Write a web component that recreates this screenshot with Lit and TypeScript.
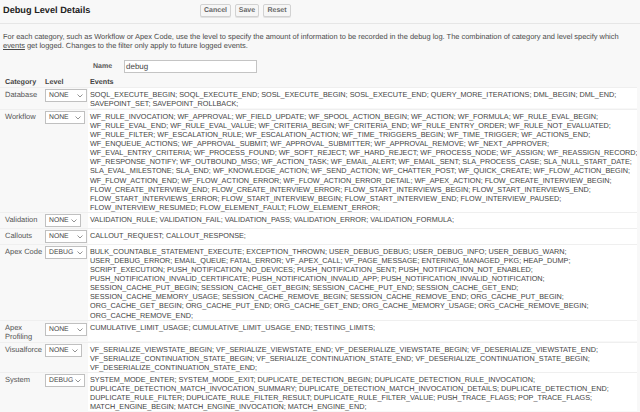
import { LitElement, html, css } from "lit";
import { customElement } from "lit/decorators.js";

interface Row { cat: string[]; level: string; w: number; h: number; mt: number; st: number; lines: string[]; }

const rows: Row[] = [
  { cat: ["Database"], level: "NONE", w: 42, h: 20, mt: 2, st: 1, lines: [
    "SOQL_EXECUTE_BEGIN; SOQL_EXECUTE_END; SOSL_EXECUTE_BEGIN; SOSL_EXECUTE_END; QUERY_MORE_ITERATIONS; DML_BEGIN; DML_END;",
    "SAVEPOINT_SET; SAVEPOINT_ROLLBACK;" ] },
  { cat: ["Workflow"], level: "NONE", w: 40, h: 102, mt: 2, st: 1, lines: [
    "WF_RULE_INVOCATION; WF_APPROVAL; WF_FIELD_UPDATE; WF_SPOOL_ACTION_BEGIN; WF_ACTION; WF_FORMULA; WF_RULE_EVAL_BEGIN;",
    "WF_RULE_EVAL_END; WF_RULE_EVAL_VALUE; WF_CRITERIA_BEGIN; WF_CRITERIA_END; WF_RULE_ENTRY_ORDER; WF_RULE_NOT_EVALUATED;",
    "WF_RULE_FILTER; WF_ESCALATION_RULE; WF_ESCALATION_ACTION; WF_TIME_TRIGGERS_BEGIN; WF_TIME_TRIGGER; WF_ACTIONS_END;",
    "WF_ENQUEUE_ACTIONS; WF_APPROVAL_SUBMIT; WF_APPROVAL_SUBMITTER; WF_APPROVAL_REMOVE; WF_NEXT_APPROVER;",
    "WF_EVAL_ENTRY_CRITERIA; WF_PROCESS_FOUND; WF_SOFT_REJECT; WF_HARD_REJECT; WF_PROCESS_NODE; WF_ASSIGN; WF_REASSIGN_RECORD;",
    "WF_RESPONSE_NOTIFY; WF_OUTBOUND_MSG; WF_ACTION_TASK; WF_EMAIL_ALERT; WF_EMAIL_SENT; SLA_PROCESS_CASE; SLA_NULL_START_DATE;",
    "SLA_EVAL_MILESTONE; SLA_END; WF_KNOWLEDGE_ACTION; WF_SEND_ACTION; WF_CHATTER_POST; WF_QUICK_CREATE; WF_FLOW_ACTION_BEGIN;",
    "WF_FLOW_ACTION_END; WF_FLOW_ACTION_ERROR; WF_FLOW_ACTION_ERROR_DETAIL; WF_APEX_ACTION; FLOW_CREATE_INTERVIEW_BEGIN;",
    "FLOW_CREATE_INTERVIEW_END; FLOW_CREATE_INTERVIEW_ERROR; FLOW_START_INTERVIEWS_BEGIN; FLOW_START_INTERVIEWS_END;",
    "FLOW_START_INTERVIEWS_ERROR; FLOW_START_INTERVIEW_BEGIN; FLOW_START_INTERVIEW_END; FLOW_INTERVIEW_PAUSED;",
    "FLOW_INTERVIEW_RESUMED; FLOW_ELEMENT_FAULT; FLOW_ELEMENT_ERROR;" ] },
  { cat: ["Validation"], level: "NONE", w: 36, h: 15, mt: 1, st: 1, lines: [
    "VALIDATION_RULE; VALIDATION_FAIL; VALIDATION_PASS; VALIDATION_ERROR; VALIDATION_FORMULA;" ] },
  { cat: ["Callouts"], level: "NONE", w: 42, h: 15, mt: 1, st: 1, lines: [
    "CALLOUT_REQUEST; CALLOUT_RESPONSE;" ] },
  { cat: ["Apex Code"], level: "DEBUG", w: 42, h: 75, mt: 1, st: 1, lines: [
    "BULK_COUNTABLE_STATEMENT_EXECUTE; EXCEPTION_THROWN; USER_DEBUG_DEBUG; USER_DEBUG_INFO; USER_DEBUG_WARN;",
    "USER_DEBUG_ERROR; EMAIL_QUEUE; FATAL_ERROR; VF_APEX_CALL; VF_PAGE_MESSAGE; ENTERING_MANAGED_PKG; HEAP_DUMP;",
    "SCRIPT_EXECUTION; PUSH_NOTIFICATION_NO_DEVICES; PUSH_NOTIFICATION_SENT; PUSH_NOTIFICATION_NOT_ENABLED;",
    "PUSH_NOTIFICATION_INVALID_CERTIFICATE; PUSH_NOTIFICATION_INVALID_APP; PUSH_NOTIFICATION_INVALID_NOTIFICATION;",
    "SESSION_CACHE_PUT_BEGIN; SESSION_CACHE_GET_BEGIN; SESSION_CACHE_PUT_END; SESSION_CACHE_GET_END;",
    "SESSION_CACHE_MEMORY_USAGE; SESSION_CACHE_REMOVE_BEGIN; SESSION_CACHE_REMOVE_END; ORG_CACHE_PUT_BEGIN;",
    "ORG_CACHE_GET_BEGIN; ORG_CACHE_PUT_END; ORG_CACHE_GET_END; ORG_CACHE_MEMORY_USAGE; ORG_CACHE_REMOVE_BEGIN;",
    "ORG_CACHE_REMOVE_END;" ] },
  { cat: ["Apex", "Profiling"], level: "NONE", w: 42, h: 20, mt: 1, st: 2, lines: [
    "CUMULATIVE_LIMIT_USAGE; CUMULATIVE_LIMIT_USAGE_END; TESTING_LIMITS;" ] },
  { cat: ["Visualforce"], level: "NONE", w: 37, h: 29, mt: 2, st: 1, lines: [
    "VF_SERIALIZE_VIEWSTATE_BEGIN; VF_SERIALIZE_VIEWSTATE_END; VF_DESERIALIZE_VIEWSTATE_BEGIN; VF_DESERIALIZE_VIEWSTATE_END;",
    "VF_SERIALIZE_CONTINUATION_STATE_BEGIN; VF_SERIALIZE_CONTINUATION_STATE_END; VF_DESERIALIZE_CONTINUATION_STATE_BEGIN;",
    "VF_DESERIALIZE_CONTINUATION_STATE_END;" ] },
  { cat: ["System"], level: "DEBUG", w: 40, h: 38, mt: 1, st: 1, lines: [
    "SYSTEM_MODE_ENTER; SYSTEM_MODE_EXIT; DUPLICATE_DETECTION_BEGIN; DUPLICATE_DETECTION_RULE_INVOCATION;",
    "DUPLICATE_DETECTION_MATCH_INVOCATION_SUMMARY; DUPLICATE_DETECTION_MATCH_INVOCATION_DETAILS; DUPLICATE_DETECTION_END;",
    "DUPLICATE_RULE_FILTER; DUPLICATE_RULE_FILTER_RESULT; DUPLICATE_RULE_FILTER_VALUE; PUSH_TRACE_FLAGS; POP_TRACE_FLAGS;",
    "MATCH_ENGINE_BEGIN; MATCH_ENGINE_INVOCATION; MATCH_ENGINE_END;" ] },
];

@customElement("app-root")
export class AppRoot extends LitElement {
  static styles = css`
    :host { display: block; width: 640px; height: 412px; overflow: hidden; background: #f8f8f8;
      font-family: "Liberation Sans", Arial, sans-serif; font-size: 7.5px; color: #444; text-rendering: geometricPrecision; }
    .head { display: flex; align-items: center; height: 24px; border-bottom: 1px solid #e6e6e6; padding-left: 3px; padding-bottom: 3px; box-sizing: border-box; }
    .title { font-weight: bold; font-size: 9.2px; color: #222; width: 197px; flex: none; }
    .btn { display: flex; align-items: center; justify-content: center; height: 11px; margin-right: 4px; border: 1px solid #d2d2d2; border-radius: 2px;
      background: #f6f6f6; box-shadow: 0 1px 0 #e2e2e2; font-weight: bold; font-size: 7px; color: #666; box-sizing: content-box; }
    .intro { padding: 8px 0 0 3px; line-height: 9.3px; color: #4a4a4a; height: 20px; white-space: nowrap; font-size: 7.44px; }
    .name { display: flex; align-items: center; margin-top: 8px; height: 13px; }
    .name b { margin-left: 93px; width: 31px; flex: none; color: #555; font-size: 7px; }
    .input { width: 130px; height: 11px; line-height: 11px; border: 1px solid #c4c4c4; background: #fff; font-size: 8px; color: #444; padding-left: 1px; }
    .cols { display: grid; grid-template-columns: 40px 45px 1fr; font-weight: bold; margin-top: 5px; padding-left: 5px; height: 8px; line-height: 8px; font-size: 7.2px; color: #444; }
    .row { display: flex; margin-right: 3px; box-shadow: 0 -1px 0 #efefef; }
    .cat { width: 40px; padding: 1.5px 0 0 5px; line-height: 9.2px; color: #555; flex: none; white-space: nowrap; box-sizing: border-box; }
    .lvl { width: 48px; flex: none; padding-left: 5px; box-sizing: border-box; }
    .sel { display: flex; align-items: center; justify-content: space-between; height: 11px; border: 1px solid #c0c0c0; background: #fff;
      padding: 0 3px 0 3px; font-size: 6.8px; color: #444; box-sizing: content-box; }
    .sel svg { flex: none; }
    .ev { flex: 1; background: #fff; white-space: nowrap; padding: 1.5px 0 0 2px; line-height: 9.15px; font-size: 7.28px; color: #444; overflow: hidden; min-width: 0; }
  `;

  render() {
    return html`
      <div class="head">
        <div class="title">Debug Level Details</div>
        <div class="btn" style="width:29px">Cancel</div><div class="btn" style="width:22px">Save</div><div class="btn" style="width:26px">Reset</div>
      </div>
      <div class="intro">
        For each category, such as Workflow or Apex Code, use the level to specify the amount of information to be recorded in the debug log. The combination of category and level specify which<br>
        <u>events</u> get logged. Changes to the filter only apply to future logged events.
      </div>
      <div class="name"><b>Name</b><div class="input">debug</div></div>
      <div class="cols"><span>Category</span><span>Level</span><span>Events</span></div>
      ${rows.map(r => html`
        <div class="row" style="height:${r.h}px;margin-top:${r.mt}px">
          <div class="cat">${r.cat.map((c, i) => html`${i ? html`<br>` : ""}${c}`)}</div>
          <div class="lvl" style="padding-top:${r.st}px"><div class="sel" style="width:${r.w - 8}px"><span>${r.level}</span>
            <svg width="6" height="4" viewBox="0 0 6 4"><path d="M0.5 0.5 L3 3 L5.5 0.5" fill="none" stroke="#777" stroke-width="0.8"/></svg>
          </div></div>
          <div class="ev">${r.lines.map(l => html`${l}<br>`)}</div>
        </div>`)}
    `;
  }
}
